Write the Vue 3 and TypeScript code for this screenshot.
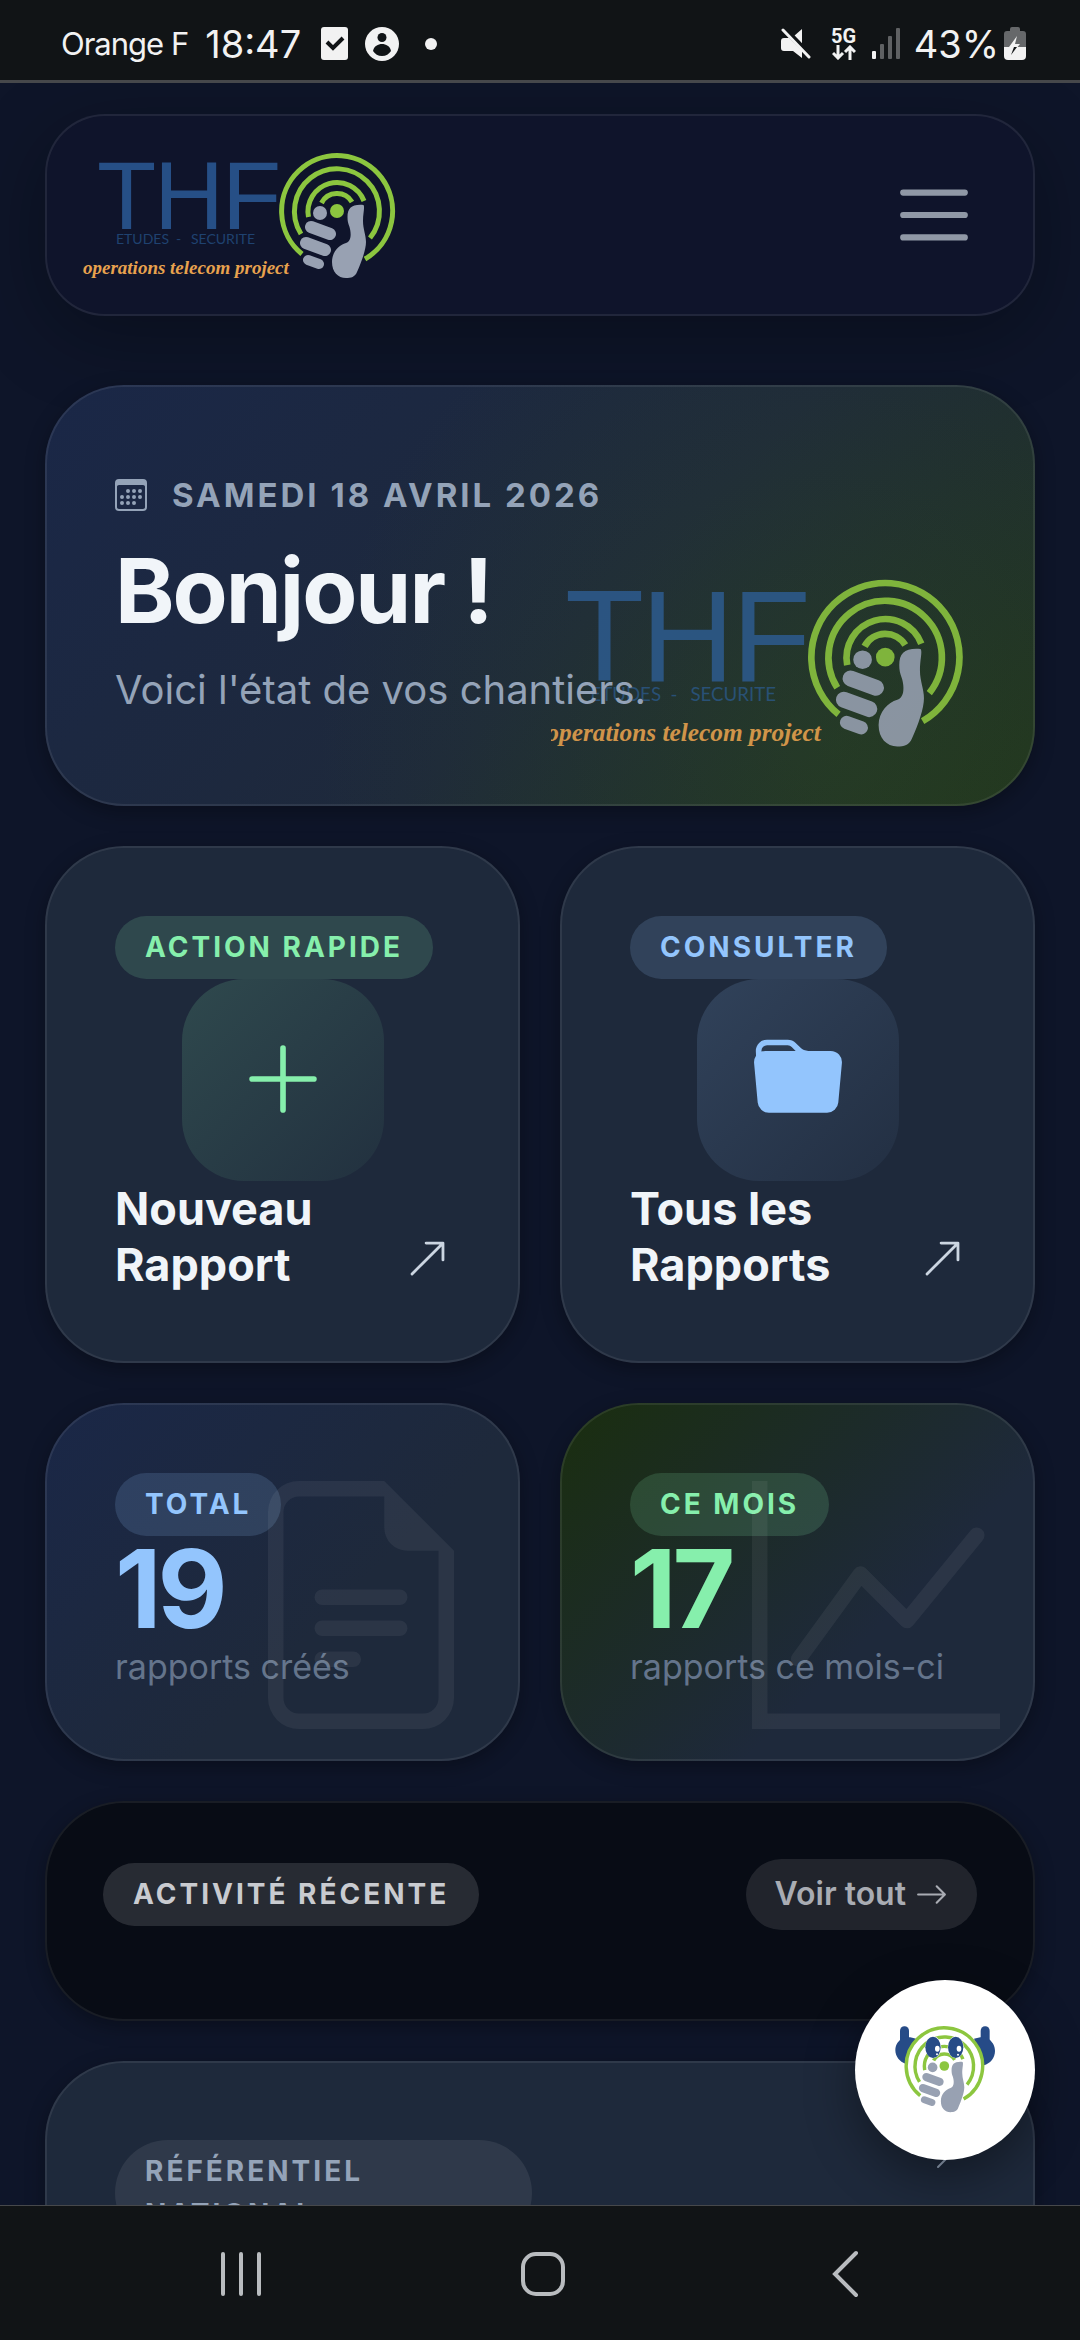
<script setup lang="ts">
interface ActionCard {
  badge: string
  lines: string[]
  tone: 'green' | 'blue'
  icon: string
}

interface StatCard {
  badge: string
  value: number
  caption: string
  tone: 'green' | 'blue'
  paths: string[]
}

const arrowUpRight =
  'M14 2.5a.5.5 0 0 0-.5-.5h-6a.5.5 0 0 0 0 1h4.793L2.146 13.146a.5.5 0 0 0 .708.708L13 3.707V8.5a.5.5 0 0 0 1 0z'

const actions: ActionCard[] = [
  {
    badge: 'ACTION RAPIDE',
    lines: ['Nouveau', 'Rapport'],
    tone: 'green',
    icon: 'M8 2a.5.5 0 0 1 .5.5v5h5a.5.5 0 0 1 0 1h-5v5a.5.5 0 0 1-1 0v-5h-5a.5.5 0 0 1 0-1h5v-5A.5.5 0 0 1 8 2',
  },
  {
    badge: 'CONSULTER',
    lines: ['Tous les', 'Rapports'],
    tone: 'blue',
    icon: 'M9.828 3h3.982a2 2 0 0 1 1.992 2.181l-.637 7A2 2 0 0 1 13.174 14H2.825a2 2 0 0 1-1.991-1.819l-.637-7a1.99 1.99 0 0 1 .342-1.31L.5 3a2 2 0 0 1 2-2h3.672a2 2 0 0 1 1.414.586l.828.828A2 2 0 0 0 9.828 3m-8.322.12q.322-.119.684-.12h5.396l-.707-.707A1 1 0 0 0 6.172 2H2.5a1 1 0 0 0-1 .981z',
  },
]

const stats: StatCard[] = [
  {
    badge: 'TOTAL',
    value: 19,
    caption: 'rapports créés',
    tone: 'blue',
    paths: [
      'M5.5 7a.5.5 0 0 0 0 1h5a.5.5 0 0 0 0-1zM5 9.5a.5.5 0 0 1 .5-.5h5a.5.5 0 0 1 0 1h-5a.5.5 0 0 1-.5-.5m0 2a.5.5 0 0 1 .5-.5h2a.5.5 0 0 1 0 1h-2a.5.5 0 0 1-.5-.5',
      'M9.5 0H4a2 2 0 0 0-2 2v12a2 2 0 0 0 2 2h8a2 2 0 0 0 2-2V4.5zm0 1v2A1.5 1.5 0 0 0 11 4.5h2V14a1 1 0 0 1-1 1H4a1 1 0 0 1-1-1V2a1 1 0 0 1 1-1z',
    ],
  },
  {
    badge: 'CE MOIS',
    value: 17,
    caption: 'rapports ce mois-ci',
    tone: 'green',
    paths: [
      'M0 0h1v15h15v1H0zm14.817 3.113a.5.5 0 0 1 .07.704l-4.5 5.5a.5.5 0 0 1-.74.037L7.06 6.767l-3.656 5.027a.5.5 0 0 1-.808-.588l4-5.5a.5.5 0 0 1 .758-.06l2.609 2.61 4.15-5.073a.5.5 0 0 1 .704-.07',
    ],
  },
]
</script>

<template>
  <div class="app">
    <svg class="defs" width="0" height="0" aria-hidden="true">
      <symbol id="mark" viewBox="0 0 120 134" overflow="visible">
        <g fill="none" stroke="#8cc63f" stroke-width="5">
          <path d="M25 103A55.500 55.500 0 1 1 88 108" />
          <path d="M24 83A42.500 42.500 0 1 1 93 87" />
          <path d="M31.500 66A29 29 0 0 1 87 50" />
          <path d="M44.500 52A17.500 17.500 0 0 1 75 51" />
        </g>
        <circle cx="60" cy="60" r="7" fill="#8cc63f" />
        <g stroke="#98a1b2" stroke-linecap="round">
          <path d="M34 76L53 83M29 92L48 99" stroke-width="12" />
          <path d="M31 109L42 113" stroke-width="10" />
        </g>
        <circle cx="43" cy="62" r="7" fill="#98a1b2" />
        <path
          fill="#98a1b2"
          d="M70.500 66C70.500 57 75 53 86.500 54C88 56 86 62 86 70C86 78 89 84 89 91C89 98 85 110 80 121C78 126 74 127 69 127C61 127 55 121 55 111C55 101 62 94 69 92C75 90 74 81 72.500 76C71 72 70.500 70 70.500 66Z"
        />
      </symbol>
    </svg>

    <div class="status">
      <span class="carrier">Orange F</span>
      <span class="clock">18:47</span>
      <svg class="st-check" width="27" height="33" viewBox="0 0 27 33">
        <rect width="27" height="33" rx="3" fill="#f2f2f2" />
        <path d="M6 15l6 6 10-10" fill="none" stroke="#111416" stroke-width="4" />
      </svg>
      <svg class="st-user" width="34" height="34" viewBox="0 0 34 34">
        <circle cx="17" cy="17" r="17" fill="#f2f2f2" />
        <circle cx="17" cy="10.500" r="4.500" fill="#111416" />
        <path d="M8 24c1-5 5-7 9-7s8 2 9 7c-2 3-5 5-9 5s-7-2-9-5z" fill="#111416" />
      </svg>
      <svg class="st-dot" width="12" height="12" viewBox="0 0 12 12"><circle cx="6" cy="6" r="6" fill="#f2f2f2" /></svg>
      <span class="spacer"></span>
      <svg class="st-mute" width="30" height="32" viewBox="0 0 30 32">
        <path d="M0 13q0-3 3-3h5l13 13v7l-9-7H3q-3 0-3-3zM21 1v15L13 8z" fill="#f2f2f2" />
        <path d="M2 2l26 27" stroke="#f2f2f2" stroke-width="3" stroke-linecap="round" />
        <path d="M6 1l22 23" stroke="#111416" stroke-width="2" />
      </svg>
      <span class="net">
        <span class="net-label">5G</span>
        <svg width="24" height="15" viewBox="0 0 24 15" fill="none" stroke="#f2f2f2" stroke-width="3">
          <path d="M6 0v13M1 8l5 5 5-5M18 15V2M13 7l5-5 5 5" />
        </svg>
      </span>
      <svg class="st-bars" width="28" height="31" viewBox="0 0 28 31">
        <rect x="0" y="23" width="4" height="8" rx="1" fill="#f2f2f2" />
        <rect x="8" y="16" width="4" height="15" rx="1" fill="#5f6163" />
        <rect x="16" y="8" width="4" height="23" rx="1" fill="#5f6163" />
        <rect x="24" y="0" width="4" height="31" rx="1" fill="#5f6163" />
      </svg>
      <span class="clock">43%</span>
      <svg class="st-batt" width="22" height="33" viewBox="0 0 22 33">
        <path d="M6 4V2q0-2 2-2h6q2 0 2 2v2h3q3 0 3 3v13H0V7q0-3 3-3z" fill="#66686a" />
        <path d="M0 20h22v9q0 4-4 4H4q-4 0-4-4z" fill="#f2f2f2" />
        <path d="M13 9l-8 11h5l-3 8 9-11h-5z" fill="#f2f2f2" />
        <path d="M10 20l-3 8 6-8z" fill="#111416" />
      </svg>
    </div>

    <main class="scroll">
      <header class="topbar card">
        <a href="#" class="brand" aria-label="THF">
          <svg class="logo" viewBox="0 0 314 129">
            <text class="thf" x="15 72 140" y="78">THF</text>
            <text class="sub" x="34" y="93">ETUDES</text>
            <text class="sub" x="94" y="93">-</text>
            <text class="sub" x="109" y="93">SECURITE</text>
            <text class="script" x="1" y="123">operations telecom project</text>
            <use href="#mark" x="195" y="0" width="120" height="134" />
          </svg>
        </a>
        <button type="button" class="menu" aria-label="Menu">
          <svg width="84" height="84" viewBox="0 0 30 30">
            <path d="M4 7h22M4 15h22M4 23h22" stroke="#9098a6" stroke-width="2.200" stroke-linecap="round" />
          </svg>
        </button>
      </header>

      <section class="hero card">
        <svg class="logo hero-logo" viewBox="0 0 314 129">
          <text class="thf" x="15 72 140" y="78">THF</text>
          <text class="sub" x="34" y="93">ETUDES</text>
          <text class="sub" x="94" y="93">-</text>
          <text class="sub" x="109" y="93">SECURITE</text>
          <text class="script" x="1" y="123">operations telecom project</text>
          <use href="#mark" x="195" y="0" width="120" height="134" />
        </svg>
        <div class="date">
          <svg width="32" height="32" viewBox="0 0 16 16" fill="currentColor">
            <path
              d="M14 0H2a2 2 0 0 0-2 2v12a2 2 0 0 0 2 2h12a2 2 0 0 0 2-2V2a2 2 0 0 0-2-2M1 3.857C1 3.384 1.448 3 2 3h12c.552 0 1 .384 1 .857v10.286c0 .473-.448.857-1 .857H2c-.552 0-1-.384-1-.857z"
            />
            <path
              d="M6.500 7a1 1 0 1 0 0-2 1 1 0 0 0 0 2m3 0a1 1 0 1 0 0-2 1 1 0 0 0 0 2m3 0a1 1 0 1 0 0-2 1 1 0 0 0 0 2m-9 3a1 1 0 1 0 0-2 1 1 0 0 0 0 2m3 0a1 1 0 1 0 0-2 1 1 0 0 0 0 2m3 0a1 1 0 1 0 0-2 1 1 0 0 0 0 2m3 0a1 1 0 1 0 0-2 1 1 0 0 0 0 2m-9 3a1 1 0 1 0 0-2 1 1 0 0 0 0 2m3 0a1 1 0 1 0 0-2 1 1 0 0 0 0 2m3 0a1 1 0 1 0 0-2 1 1 0 0 0 0 2"
            />
          </svg>
          <span>SAMEDI 18 AVRIL 2026</span>
        </div>
        <h1>Bonjour !</h1>
        <p>Voici l'état de vos chantiers.</p>
      </section>

      <div class="row">
        <a v-for="a in actions" :key="a.badge" href="#" class="card action" :class="a.tone">
          <span class="badge">{{ a.badge }}</span>
          <span class="tile">
            <svg width="90" height="90" viewBox="0 0 16 16" fill="currentColor"><path :d="a.icon" /></svg>
          </span>
          <span class="foot">
            <span class="title"><span v-for="l in a.lines" :key="l">{{ l }}</span></span>
            <svg class="go" width="45" height="45" viewBox="0 0 16 16" fill="currentColor"><path :d="arrowUpRight" /></svg>
          </span>
        </a>
      </div>

      <div class="row">
        <section v-for="s in stats" :key="s.badge" class="card stat" :class="s.tone">
          <span class="badge">{{ s.badge }}</span>
          <strong>{{ s.value }}</strong>
          <span class="caption">{{ s.caption }}</span>
          <svg class="ghost" viewBox="0 0 16 16" fill="currentColor"><path v-for="p in s.paths" :key="p" :d="p" /></svg>
        </section>
      </div>

      <section class="card activity">
        <h2 class="badge">ACTIVITÉ RÉCENTE</h2>
        <a href="#" class="all">
          <span>Voir tout</span>
          <svg width="33" height="33" viewBox="0 0 16 16" fill="currentColor">
            <path
              d="M1 8a.5.5 0 0 1 .5-.5h11.793l-3.147-3.146a.5.5 0 0 1 .708-.708l4 4a.5.5 0 0 1 0 .708l-4 4a.5.5 0 0 1-.708-.708L13.293 8.500H1.500A.5.5 0 0 1 1 8"
            />
          </svg>
        </a>
      </section>

      <a href="#" class="card reference">
        <span class="badge">RÉFÉRENTIEL NATIONAL</span>
        <svg width="32" height="32" viewBox="0 0 16 16" fill="currentColor"><path :d="arrowUpRight" /></svg>
      </a>

      <button type="button" class="fab" aria-label="Assistant">
        <svg width="100" height="88" viewBox="165 170 300 264">
          <g fill="#264b87">
            <rect x="180" y="171" width="27" height="60" rx="13" />
            <rect x="422" y="171" width="27" height="60" rx="13" />
            <path d="M180 212C190 200 215 203 228 208L196 283C180 278 166 262 166 243C166 228 172 220 180 212Z" />
            <path d="M450 212C440 200 418 203 402 208L432 288C450 283 465 266 465 245C465 230 458 220 450 212Z" />
          </g>
          <circle cx="313" cy="290" r="116" fill="#fff" />
          <use href="#mark" x="189" y="166" width="248" height="277" />
          <ellipse cx="280" cy="234" rx="24" ry="33" fill="#fff" />
          <ellipse cx="347" cy="234" rx="24" ry="33" fill="#fff" />
          <ellipse cx="279" cy="234" rx="23" ry="32" fill="#264b87" />
          <ellipse cx="347" cy="234" rx="23" ry="32" fill="#264b87" />
          <g fill="#fff">
            <ellipse cx="292" cy="238" rx="7" ry="9" />
            <ellipse cx="357" cy="238" rx="7" ry="9" />
            <circle cx="291" cy="255" r="3" />
            <circle cx="354" cy="256" r="3" />
          </g>
        </svg>
      </button>
    </main>

    <nav class="sysnav" aria-label="Navigation">
      <button type="button" aria-label="Applications récentes">
        <svg width="48" height="48" viewBox="0 0 48 48"><path d="M6 4v40M24 4v40M42 4v40" /></svg>
      </button>
      <button type="button" aria-label="Accueil">
        <svg width="48" height="48" viewBox="0 0 48 48"><rect x="4" y="4" width="40" height="40" rx="13" /></svg>
      </button>
      <button type="button" aria-label="Retour">
        <svg width="48" height="48" viewBox="0 0 48 48"><path d="M35 3L14 24l21 21" /></svg>
      </button>
    </nav>
  </div>
</template>

<style>
body {
  margin: 0;
  background: #0e1529;
}
</style>

<style scoped>
* {
  box-sizing: border-box;
}

.app {
  display: flex;
  flex-direction: column;
  height: 100vh;
  overflow: hidden;
  background: #0e1529;
  color: #f1f5f9;
  font-family: Inter, 'Open Sans', sans-serif;
}

.defs {
  position: absolute;
}

svg {
  display: block;
  flex: none;
}

a {
  color: inherit;
  text-decoration: none;
}

button {
  display: flex;
  align-items: center;
  justify-content: center;
  padding: 0;
  border: 0;
  background: none;
}

/* status bar */
.status {
  display: flex;
  flex: none;
  align-items: center;
  height: 83px;
  padding: 7px 54px 0 61px;
  border-bottom: 3px solid #46484b;
  background: #111416;
  color: #f2f2f2;
}

.carrier {
  font-size: 31px;
  letter-spacing: -1px;
}

.clock {
  font-size: 38px;
}

.carrier + .clock {
  margin-left: 17px;
}

.st-check {
  margin-left: 20px;
}

.st-user {
  margin-left: 17px;
}

.st-dot {
  margin-left: 26px;
}

.spacer {
  flex: 1;
}

.net {
  display: flex;
  flex-direction: column;
  align-items: center;
  width: 24px;
  margin-left: 21px;
}

.net-label {
  font: 700 20px/18px Roboto, sans-serif;
}

.st-bars {
  margin: 0 14px 0 16px;
}

.st-batt {
  margin-left: 5px;
}

/* page */
.scroll {
  position: relative;
  display: flex;
  flex: 1;
  flex-direction: column;
  gap: 40px;
  min-height: 0;
  overflow: hidden;
  padding: 31px 45px 0;
}

.card {
  position: relative;
  flex: none;
  border: 2px solid rgba(255, 255, 255, 0.08);
  border-radius: 79px;
  background: #1e293b;
  box-shadow: 0 6px 20px rgba(0, 0, 0, 0.3);
}

.topbar {
  display: flex;
  align-items: center;
  justify-content: space-between;
  height: 202px;
  margin-bottom: 29px;
  padding: 0 57px 0 35px;
  border-radius: 60px;
  background: #0f142b;
  box-shadow: 0 20px 80px rgba(0, 0, 0, 0.3);
}

.logo {
  width: 314px;
  overflow: visible;
}

.thf {
  fill: #264f86;
  font: 97px 'Liberation Sans', sans-serif;
}

.sub {
  fill: #1f4270;
  font: 14px Lato, sans-serif;
}

.script {
  fill: #e8a24e;
  font: italic 700 19px 'Liberation Serif', serif;
}

/* hero */
.hero {
  padding: 84px 68px;
  overflow: hidden;
  background:
    radial-gradient(circle at 80% 85%, rgba(60, 100, 20, 0.22), transparent 520px) border-box,
    linear-gradient(135deg, #1a2747 0%, #1e293b 55%, #1f3220 100%) border-box;
}

.hero-logo {
  position: absolute;
  right: 69px;
  bottom: 55px;
  width: 419px;
  opacity: 0.88;
  clip-path: inset(0 0 0 6px);
}

.hero-logo .thf {
  fill: #2d5a8c;
}

.hero-logo .sub {
  fill: #2a5580;
}

.date {
  position: relative;
  display: flex;
  align-items: center;
  gap: 25px;
  color: #94a3b8;
  font-size: 33px;
  font-weight: 700;
  line-height: 48px;
  letter-spacing: 3px;
}

.hero h1 {
  position: relative;
  margin: 22px 0 19px;
  color: #f1f5f9;
  font-size: 90px;
  font-weight: 700;
  line-height: 100px;
  letter-spacing: -2px;
}

.hero p {
  position: relative;
  margin: 0;
  color: #94a3b8;
  font-size: 40px;
  line-height: 60px;
}

/* grid cards */
.row {
  display: grid;
  flex: none;
  grid-template-columns: 1fr 1fr;
  gap: 40px;
}

.action,
.stat {
  display: flex;
  flex-direction: column;
  align-items: flex-start;
  padding: 68px;
}

.badge {
  margin: 0;
  padding: 10px 30px;
  border-radius: 53px;
  font-size: 28px;
  font-weight: 700;
  line-height: 43px;
  letter-spacing: 3px;
}

.green {
  --tone: #86efac;
  --soft: rgba(134, 239, 172, 0.16);
  --faint: rgba(134, 239, 172, 0.04);
}

.blue {
  --tone: #93c5fd;
  --soft: rgba(147, 197, 253, 0.16);
  --faint: rgba(147, 197, 253, 0.04);
}

.action .badge,
.stat .badge {
  background: var(--soft);
  color: var(--tone);
}

.tile {
  display: flex;
  align-items: center;
  justify-content: center;
  align-self: center;
  width: 202px;
  height: 202px;
  padding-bottom: 2px;
  border-radius: 62px;
  background: linear-gradient(135deg, var(--soft), var(--faint));
  color: var(--tone);
}

.foot {
  display: flex;
  align-items: flex-end;
  justify-content: space-between;
  align-self: stretch;
}

.title {
  display: flex;
  flex-direction: column;
  font-size: 45px;
  font-weight: 700;
  line-height: 56px;
}

.go {
  margin-bottom: 12px;
  color: #cbd5e1;
}

.stat.blue {
  background: linear-gradient(135deg, #1a2747 0%, #1e293b 60%) border-box;
}

.stat.green {
  background: linear-gradient(135deg, #1a2e0f 0%, #1e293b 65%) border-box;
}

.stat strong {
  color: var(--tone);
  font-size: 108px;
  font-weight: 700;
  line-height: 106px;
  letter-spacing: -4px;
}

.caption {
  color: #64748b;
  font-size: 34px;
  line-height: 49px;
}

.ghost {
  position: absolute;
  right: 33px;
  bottom: 30px;
  width: 248px;
  color: rgba(255, 255, 255, 0.06);
}

/* recent activity */
.activity {
  display: flex;
  align-items: center;
  justify-content: space-between;
  padding: 56px 56px 89px;
  border-color: rgba(255, 255, 255, 0.07);
  background: #080c15;
}

.activity .badge {
  background: rgba(255, 255, 255, 0.13);
  color: #c9cbd0;
}

.all {
  display: flex;
  align-items: center;
  gap: 9px;
  padding: 11px 29px 12px;
  border-radius: 36px;
  background: rgba(255, 255, 255, 0.1);
  color: #a9acb3;
  font-size: 32px;
  font-weight: 600;
  line-height: 48px;
}

/* reference card */
.reference {
  display: grid;
  grid-template-columns: 1fr 1fr;
  align-items: start;
  gap: 16px;
  padding: 77px 68px;
  color: #94a3b8;
}

.reference .badge {
  background: rgba(255, 255, 255, 0.08);
}

.reference svg {
  justify-self: end;
}

.fab {
  position: absolute;
  right: 45px;
  bottom: 45px;
  width: 180px;
  height: 180px;
  border-radius: 50%;
  background: #fff;
  box-shadow: 0 16px 50px rgba(0, 0, 0, 0.4);
}

/* system navigation */
.sysnav {
  display: flex;
  flex: none;
  height: 135px;
  padding: 2px 84px 0 90px;
  border-top: 1px solid #46484b;
  background: #111416;
}

.sysnav button {
  flex: 1;
}

.sysnav svg {
  fill: none;
  stroke: #b9bcbf;
  stroke-width: 4;
  stroke-linecap: round;
}
</style>
